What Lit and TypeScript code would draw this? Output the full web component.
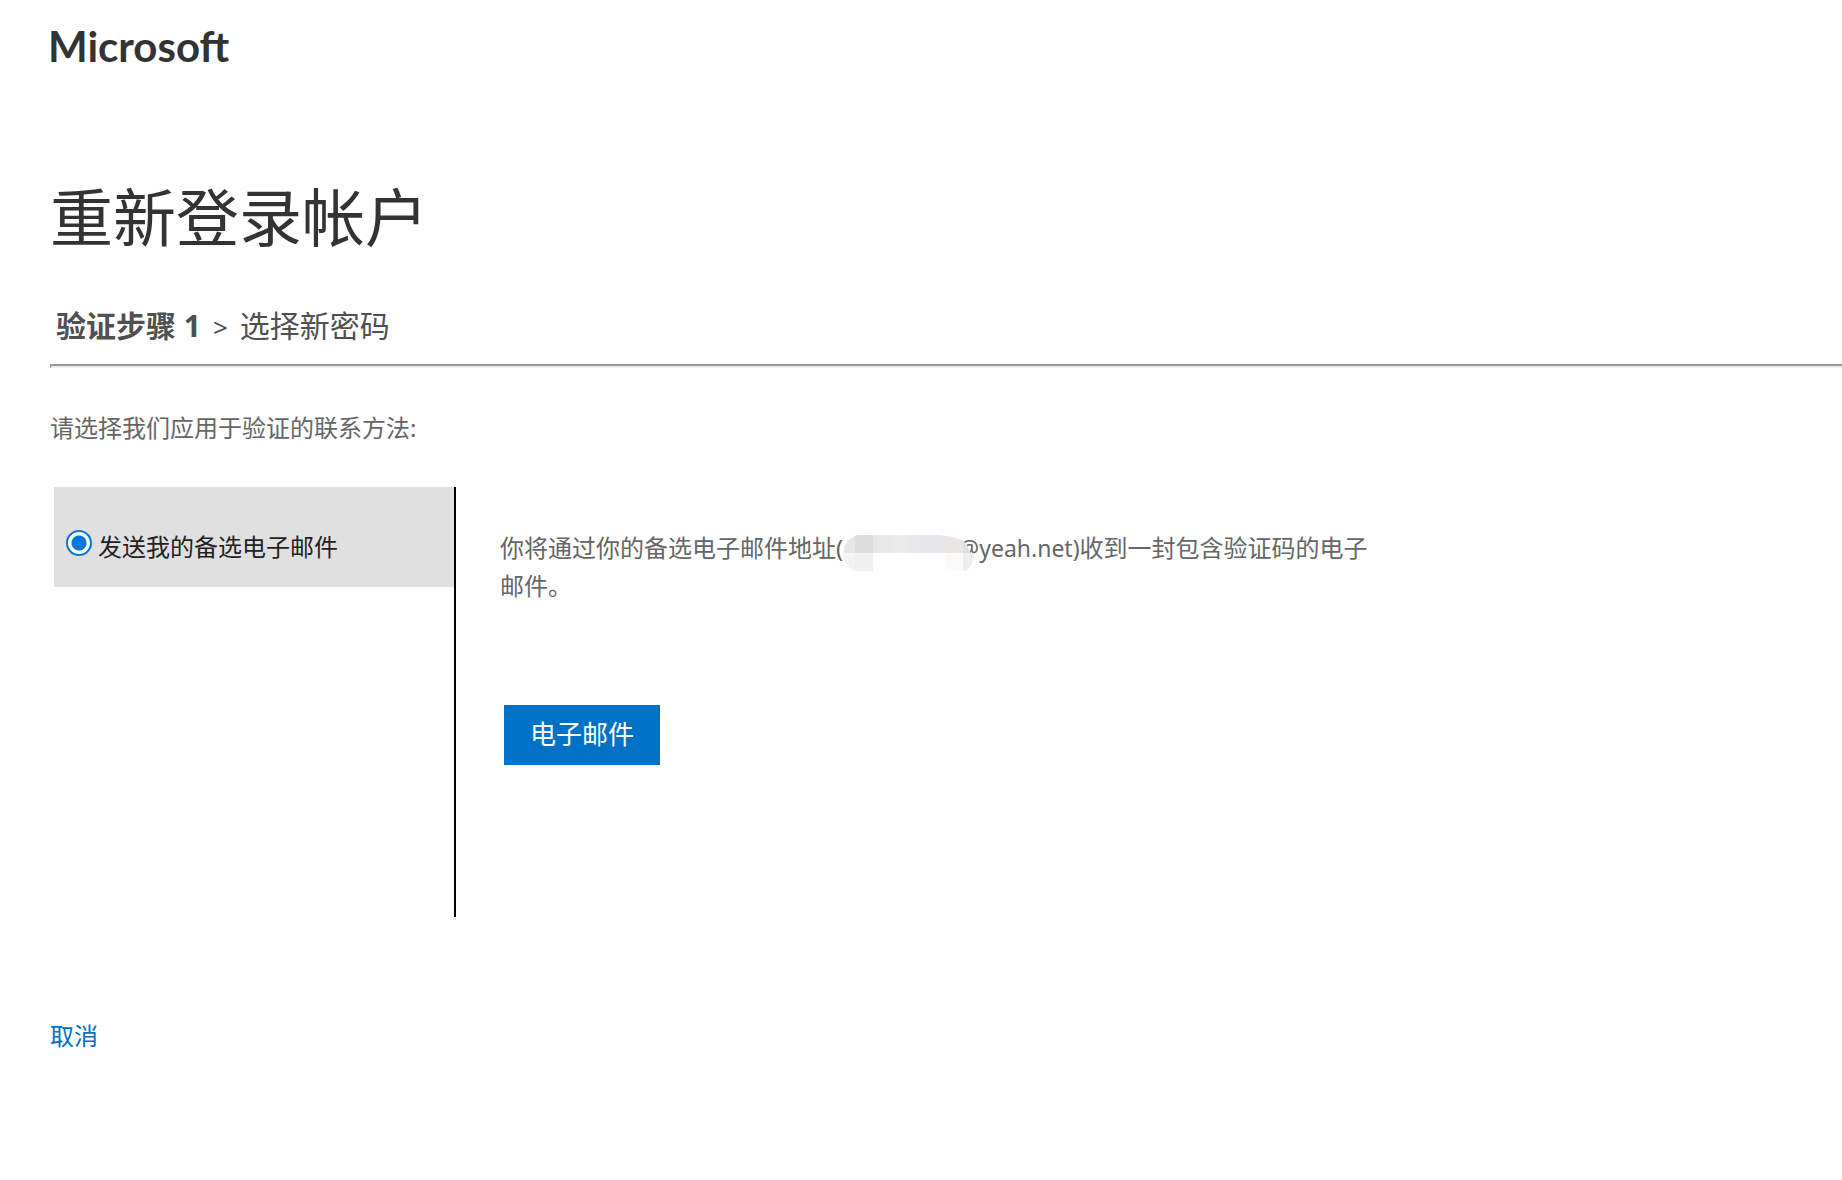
import { LitElement, html, css } from "lit";
import { customElement } from "lit/decorators.js";

@customElement("app-root")
export class AppRoot extends LitElement {
  static styles = css`
    :host {
      display: block;
      min-height: 100vh;
      box-sizing: border-box;
      padding: 20px 0 40px 50px;
      background: #fefefe;
      color: #666;
      font-family: "Noto Sans", "Noto Sans CJK SC", sans-serif;
      font-size: 24px;
      line-height: 38px;
      overflow: hidden;
    }
    .logo {
      margin-left: -2px;
      font-family: Lato, "Noto Sans", sans-serif;
      font-size: 42px;
      font-weight: 700;
      line-height: 52px;
      color: #333;
    }
    h1 {
      margin: 99px 0 0;
      font-size: 63px;
      font-weight: 400;
      line-height: 92px;
      color: #333;
    }
    .steps {
      display: flex;
      align-items: baseline;
      gap: 12px;
      margin: 40px 0 0;
      padding: 0 6px;
      list-style: none;
      font-size: 30px;
      line-height: 46px;
      color: #505050;
    }
    .arrow {
      font-size: 26px;
    }
    hr {
      margin: 14px 0 0;
      border: 2px solid #eee;
      border-top-color: #999;
      border-left-color: #999;
      border-right: 0;
      height: 0;
    }
    .prompt {
      margin: 41px 0 0;
    }
    .panel {
      display: grid;
      grid-template-columns: 402px minmax(0, 1fr);
      margin: 40px 0 0 4px;
      min-height: 430px;
    }
    .methods {
      border-right: 2px solid #000;
    }
    .method {
      display: flex;
      align-items: center;
      gap: 6px;
      height: 100px;
      box-sizing: border-box;
      padding: 20px 12px 0;
      background: #e0e0e0;
      color: #222;
    }
    .method input {
      appearance: none;
      box-sizing: border-box;
      width: 26px;
      height: 26px;
      margin: 0 0 8px;
      border: 2px solid #0078d7;
      border-radius: 50%;
      background: radial-gradient(circle, #0078d7 7px, #fff 8px);
    }
    .detail {
      padding: 42px 0 0 44px;
    }
    .detail p {
      margin: 0;
      max-width: 880px;
    }
    .email {
      font-size: 23px;
    }
    .hidden-name {
      position: relative;
      display: inline-block;
      width: 136px;
      text-align: right;
    }
    .hidden-name svg {
      position: absolute;
      left: 0;
      top: 6px;
    }
    button {
      display: block;
      margin: 100px 0 0 4px;
      padding: 10px 26px 12px;
      border: 0;
      background: #0072c6;
      color: #fff;
      font: inherit;
      font-size: 26px;
    }
    .cancel {
      display: inline-block;
      margin: 100px 0 0;
      color: #0072c6;
      text-decoration: none;
    }
  `;

  render() {
    return html`
      <header class="logo">Microsoft</header>
      <main>
        <h1>重新登录帐户</h1>
        <ol class="steps">
          <li><strong>验证步骤 1</strong></li>
          <li class="arrow">&gt;</li>
          <li>选择新密码</li>
        </ol>
        <hr />
        <p class="prompt">请选择我们应用于验证的联系方法:</p>
        <div class="panel">
          <div class="methods">
            <label class="method">
              <input type="radio" name="method" value="email" checked />
              <span>发送我的备选电子邮件</span>
            </label>
          </div>
          <section class="detail">
            <p>
              你将通过你的备选电子邮件地址(<span class="email"><span class="hidden-name">@${this.mask()}</span>yeah.net)</span>收到一封包含验证码的电子邮件。
            </p>
            <button type="button">电子邮件</button>
          </section>
        </div>
        <a class="cancel" href="#">取消</a>
      </main>
    `;
  }

  private mask() {
    return html`<svg width="131" height="36" viewBox="0 0 131 36" aria-hidden="true">
      <defs>
        <clipPath id="pill">
          <path d="M14 0H96Q110 1 119 5Q125 9 127 18H131Q131 30 123 36H10Q2 30 0 20Q1 5 14 0Z" />
        </clipPath>
      </defs>
      <g clip-path="url(#pill)" shape-rendering="crispEdges">
        <rect width="131" height="36" fill="#fefefe" />
        <rect width="12" height="18" fill="#e6e6e6" />
        <rect x="12" width="18" height="18" fill="#dcdcdd" />
        <rect x="30" width="18" height="18" fill="#e8e8e8" />
        <rect x="48" width="18" height="18" fill="#ebeae8" />
        <rect x="66" width="18" height="18" fill="#e7e8ea" />
        <rect x="84" width="18" height="18" fill="#e6e7e9" />
        <rect x="102" width="18" height="18" fill="#e9e6e5" />
        <rect x="120" width="11" height="18" fill="#dedfe1" />
        <rect y="18" width="12" height="18" fill="#f2f3f3" />
        <rect x="12" y="18" width="18" height="18" fill="#f0f0f0" />
        <rect x="102" y="18" width="18" height="18" fill="#fafaf9" />
        <rect x="120" y="18" width="11" height="18" fill="#ededee" />
      </g>
    </svg>`;
  }
}
